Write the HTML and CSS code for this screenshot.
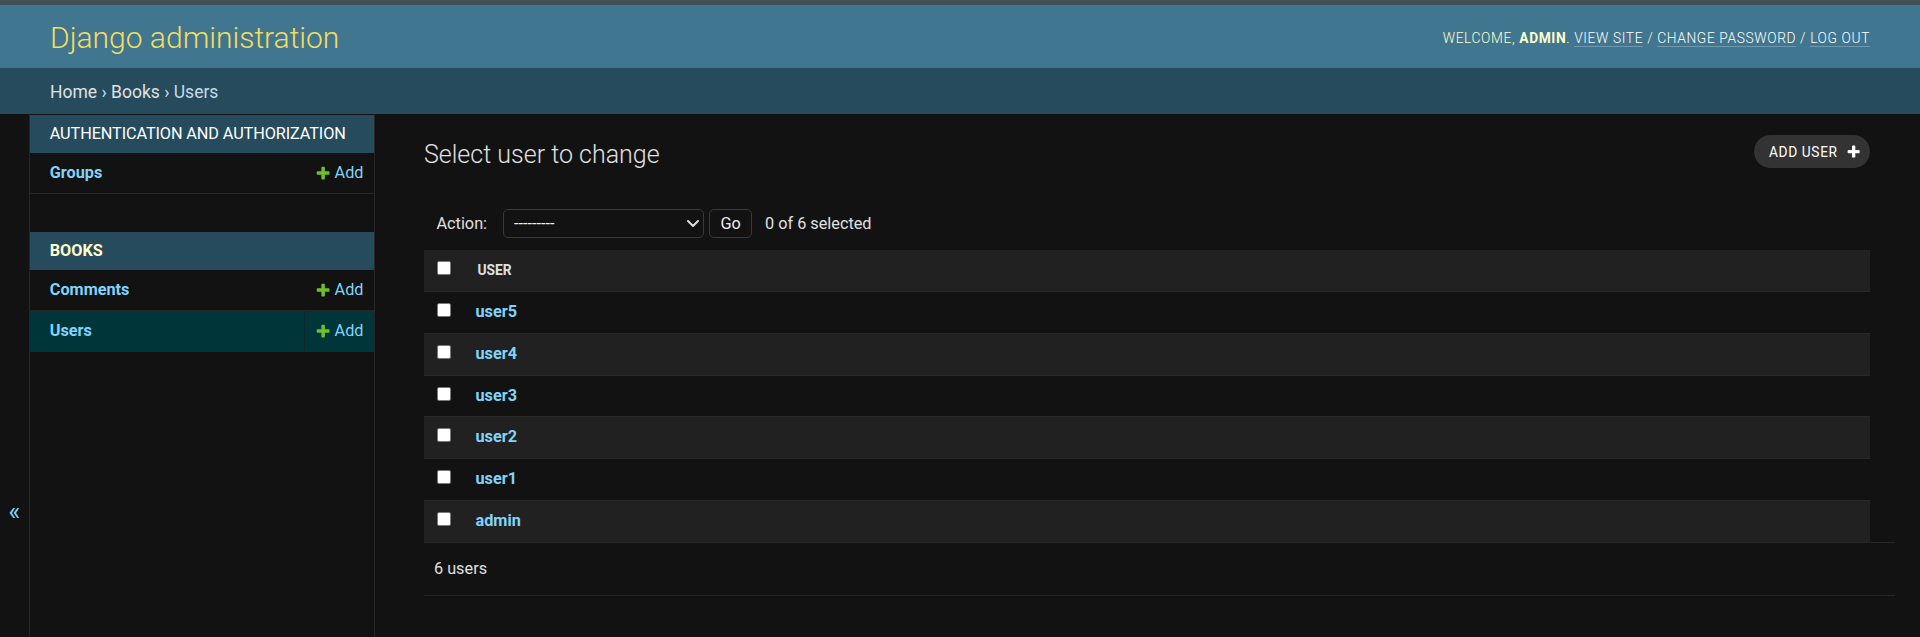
FILE: index.html
```html
<!DOCTYPE html>
<html lang="en">
<head>
<meta charset="utf-8">
<title>Select user to change | Django site admin</title>
<link rel="stylesheet" href="styles.css">
</head>
<body>
<div class="page">
  <div class="topbar"></div>
  <header class="header">
    <div class="branding">
      <h1 class="site-name"><a href="#">Django administration</a></h1>
    </div>
    <div class="user-tools">
      Welcome, <strong>admin</strong>.
      <a href="#">View site</a> /
      <a href="#">Change password</a> /
      <a href="#">Log out</a>
    </div>
  </header>
  <nav class="breadcrumbs">
    <a href="#">Home</a> › <a href="#">Books</a> › Users
  </nav>
  <div class="main">
    <button class="toggle-nav" type="button" aria-label="Toggle navigation">«</button>
    <nav class="sidebar">
      <div class="app-module">
        <table class="app-table">
          <caption class="app-caption"><a class="section" href="#">Authentication and Authorization</a></caption>
          <tr>
            <th class="model-name"><a href="#">Groups</a></th>
            <td class="model-add"><a class="addlink" href="#"><svg class="addlink-icon" viewBox="0 0 1792 1792"><path fill="#70bf2b" d="M1600 796v192q0 40-28 68t-68 28h-416v416q0 40-28 68t-68 28h-192q-40 0-68-28t-28-68v-416h-416q-40 0-68-28t-28-68v-192q0-40 28-68t68-28h416v-416q0-40 28-68t68-28h192q40 0 68 28t28 68v416h416q40 0 68 28t28 68z"/></svg>Add</a></td>
          </tr>
        </table>
      </div>
      <div class="app-module">
        <table class="app-table">
          <caption class="app-caption current-app"><a class="section" href="#">Books</a></caption>
          <tr>
            <th class="model-name"><a href="#">Comments</a></th>
            <td class="model-add"><a class="addlink" href="#"><svg class="addlink-icon" viewBox="0 0 1792 1792"><path fill="#70bf2b" d="M1600 796v192q0 40-28 68t-68 28h-416v416q0 40-28 68t-68 28h-192q-40 0-68-28t-28-68v-416h-416q-40 0-68-28t-28-68v-192q0-40 28-68t68-28h416v-416q0-40 28-68t68-28h192q40 0 68 28t28 68v416h416q40 0 68 28t28 68z"/></svg>Add</a></td>
          </tr>
          <tr class="current-model">
            <th class="model-name"><a href="#">Users</a></th>
            <td class="model-add"><a class="addlink" href="#"><svg class="addlink-icon" viewBox="0 0 1792 1792"><path fill="#70bf2b" d="M1600 796v192q0 40-28 68t-68 28h-416v416q0 40-28 68t-68 28h-192q-40 0-68-28t-28-68v-416h-416q-40 0-68-28t-28-68v-192q0-40 28-68t68-28h416v-416q0-40 28-68t68-28h192q40 0 68 28t28 68v416h416q40 0 68 28t28 68z"/></svg>Add</a></td>
          </tr>
        </table>
      </div>
    </nav>
    <div class="content">
      <div class="content-head">
        <h1 class="title">Select user to change</h1>
        <a class="object-tool" href="#">Add user<svg class="tool-icon" viewBox="0 0 1792 1792"><path fill="#ffffff" d="M1600 796v192q0 40-28 68t-68 28h-416v416q0 40-28 68t-68 28h-192q-40 0-68-28t-28-68v-416h-416q-40 0-68-28t-28-68v-192q0-40 28-68t68-28h416v-416q0-40 28-68t68-28h192q40 0 68 28t28 68v416h416q40 0 68 28t28 68z"/></svg></a>
      </div>
      <div class="changelist">
        <div class="actions">
          <label class="action-label" for="action">Action:</label>
          <div class="select-wrap">
            <select class="action-select" id="action">
              <option>---------</option>
              <option>Delete selected users</option>
            </select>
            <svg class="chevron" viewBox="0 0 12 7"><path d="M1 1l5 5 5-5" fill="none" stroke="#dddddd" stroke-width="2" stroke-linecap="round" stroke-linejoin="round"/></svg>
          </div>
          <button class="go" type="button">Go</button>
          <span class="counter">0 of 6 selected</span>
        </div>
        <table class="result-list">
          <thead>
            <tr>
              <th class="cb"><input class="checkbox" type="checkbox"></th>
              <th class="col-user">User</th>
            </tr>
          </thead>
          <tbody>
            <tr><td class="cb"><input class="checkbox" type="checkbox"></td><th class="field"><a href="#">user5</a></th></tr>
            <tr><td class="cb"><input class="checkbox" type="checkbox"></td><th class="field"><a href="#">user4</a></th></tr>
            <tr><td class="cb"><input class="checkbox" type="checkbox"></td><th class="field"><a href="#">user3</a></th></tr>
            <tr><td class="cb"><input class="checkbox" type="checkbox"></td><th class="field"><a href="#">user2</a></th></tr>
            <tr><td class="cb"><input class="checkbox" type="checkbox"></td><th class="field"><a href="#">user1</a></th></tr>
            <tr><td class="cb"><input class="checkbox" type="checkbox"></td><th class="field"><a href="#">admin</a></th></tr>
          </tbody>
        </table>
        <p class="paginator">6 users</p>
      </div>
    </div>
  </div>
</div>
</body>
</html>
```
FILE: styles.css
```css
* {
  box-sizing: border-box;
}

html,
body {
  margin: 0;
  padding: 0;
}

body {
  background: #121212;
  color: #eeeeee;
  font-family: Roboto, "Liberation Sans", Arial, sans-serif;
  font-size: 17.5px;
}

a {
  color: #81d4fa;
  text-decoration: none;
}

.page {
  min-height: 100vh;
  display: flex;
  flex-direction: column;
}

.topbar {
  flex: none;
  height: 5px;
  background: #434f57;
}

/* Header */
.header {
  flex: none;
  height: 63px;
  display: flex;
  justify-content: space-between;
  align-items: center;
  padding: 2px 50px 0;
  background: #417690;
  color: #ffffcc;
}

.site-name {
  margin: 0;
  font-size: 30px;
  font-weight: 300;
  line-height: 36px;
}

.site-name a {
  color: #f5dd5d;
}

.user-tools {
  font-size: 13.75px;
  font-weight: 300;
  letter-spacing: 0.625px;
  text-transform: uppercase;
  line-height: 20px;
}

.user-tools strong {
  font-weight: 700;
}

.user-tools a {
  color: #ffffff;
  border-bottom: 1px solid rgba(255, 255, 255, 0.25);
}

/* Breadcrumbs */
.breadcrumbs {
  flex: none;
  padding: 13.5px 50px 11.5px;
  background: #264b5d;
  color: #c4dce8;
  font-size: 17.5px;
  line-height: 21px;
}

.breadcrumbs a {
  color: #e0e0e0;
}

/* Main area */
.main {
  flex: 1;
  display: flex;
}

.toggle-nav {
  flex: 0 0 29.75px;
  display: flex;
  justify-content: center;
  align-items: flex-start;
  padding: 385px 0 0;
  margin: 0;
  border: 0;
  border-right: 1px solid #272727;
  background: #121212;
  color: #81d4fa;
  font-family: Roboto, "Liberation Sans", Arial, sans-serif;
  font-size: 25px;
  line-height: 25px;
}

/* Sidebar */
.sidebar {
  flex: 0 0 344.75px;
  border-top: 1px solid transparent;
  border-right: 1px solid #272727;
}

.app-module {
  margin-bottom: 38px;
}

.app-table {
  width: 100%;
  border-collapse: collapse;
}

.app-caption {
  caption-side: top;
  text-align: left;
  padding: 10px 10px 10px 20px;
  background: #264b5d;
  font-size: 16.25px;
  line-height: 18px;
  font-weight: 400;
  letter-spacing: -0.1px;
  text-transform: uppercase;
}

.app-caption .section {
  color: #ffffff;
}

.app-caption.current-app .section {
  color: #ffffcc;
  font-weight: 700;
  letter-spacing: 0;
}

.model-name {
  width: 100%;
  padding: 10px 10px 10px 20px;
  text-align: left;
  font-size: 16.25px;
  font-weight: 700;
  line-height: 20px;
  border-bottom: 1px solid #272727;
}

.model-add {
  padding: 10px;
  text-align: right;
  white-space: nowrap;
  font-size: 16.25px;
  line-height: 20px;
  border-bottom: 1px solid #272727;
}

.current-model {
  background: #00363a;
}

.current-model .model-add {
  border-left: 1px solid #0a2a2d;
}

.addlink-icon {
  width: 16.25px;
  height: 16.25px;
  vertical-align: top;
  margin-top: 1.5px;
  margin-right: 3.75px;
}

/* Content */
.content {
  flex: 1;
  min-width: 0;
  padding: 25px 50px 25px 49.5px;
}

.content-head {
  display: flex;
  justify-content: space-between;
  align-items: flex-start;
  margin-bottom: 24px;
}

.title {
  margin: 0;
  padding-top: 1px;
  font-size: 25px;
  font-weight: 300;
  line-height: 30px;
  color: #e0e0e0;
}

.object-tool {
  margin-top: -4px;
  display: inline-flex;
  align-items: center;
  gap: 8px;
  height: 33px;
  padding: 0 9px 0 15px;
  border-radius: 17px;
  background: #333333;
  color: #ffffff;
  font-size: 13.75px;
  letter-spacing: 0.625px;
  text-transform: uppercase;
}

.tool-icon {
  width: 15.3px;
  height: 15.3px;
}

/* Actions */
.actions {
  display: flex;
  align-items: center;
  height: 56px;
  padding: 14px 12.5px 12px;
  font-size: 16.25px;
  color: #e0e0e0;
}

.action-label {
  margin-right: 16px;
}

.select-wrap {
  position: relative;
  width: 201px;
  height: 29px;
}

.action-select {
  appearance: none;
  width: 100%;
  height: 100%;
  margin: 0;
  padding: 0 30px 0 10px;
  border: 1px solid #3a3a3a;
  border-radius: 5px;
  background: #121212;
  color: #eeeeee;
  font-family: Roboto, "Liberation Sans", Arial, sans-serif;
  font-size: 16.25px;
}

.chevron {
  position: absolute;
  right: 5px;
  top: 11px;
  width: 12px;
  height: 7px;
  pointer-events: none;
}

.go {
  margin: 0 0 0 5px;
  width: 43px;
  height: 29px;
  padding: 0;
  border: 1px solid #3a3a3a;
  border-radius: 5px;
  background: #121212;
  color: #eeeeee;
  font-family: Roboto, "Liberation Sans", Arial, sans-serif;
  font-size: 16.25px;
}

.counter {
  margin-left: 13px;
}

/* Result list */
.result-list {
  width: 100%;
  border-collapse: collapse;
}

.result-list th,
.result-list td {
  padding: 10px 12.5px;
  line-height: 20.85px;
  text-align: left;
  vertical-align: top;
  border-bottom: 1px solid #272727;
}

.result-list thead th {
  background: #212121;
  font-size: 13.75px;
  font-weight: 700;
  text-transform: uppercase;
  color: #e0e0e0;
}

.result-list thead .col-user {
  padding-left: 14.5px;
}

.result-list tbody tr:nth-child(even) {
  background: #212121;
}

.result-list tbody tr:last-child td,
.result-list tbody tr:last-child th {
  border-bottom: 0;
}

.result-list .cb {
  width: 39px;
}

.result-list .field {
  font-size: 16.25px;
  font-weight: 700;
}

.checkbox {
  appearance: none;
  display: block;
  width: 14px;
  height: 14px;
  margin: 1px 0 0;
  background: #ffffff;
  border: 1px solid #7a7a7a;
  border-radius: 2px;
}

.paginator {
  box-sizing: content-box;
  width: 100%;
  margin: 0;
  padding: 12.5px 15px 12.5px 10px;
  font-size: 16.25px;
  line-height: 27.5px;
  color: #e0e0e0;
  border-top: 1px solid #272727;
  border-bottom: 1px solid #272727;
}
```
